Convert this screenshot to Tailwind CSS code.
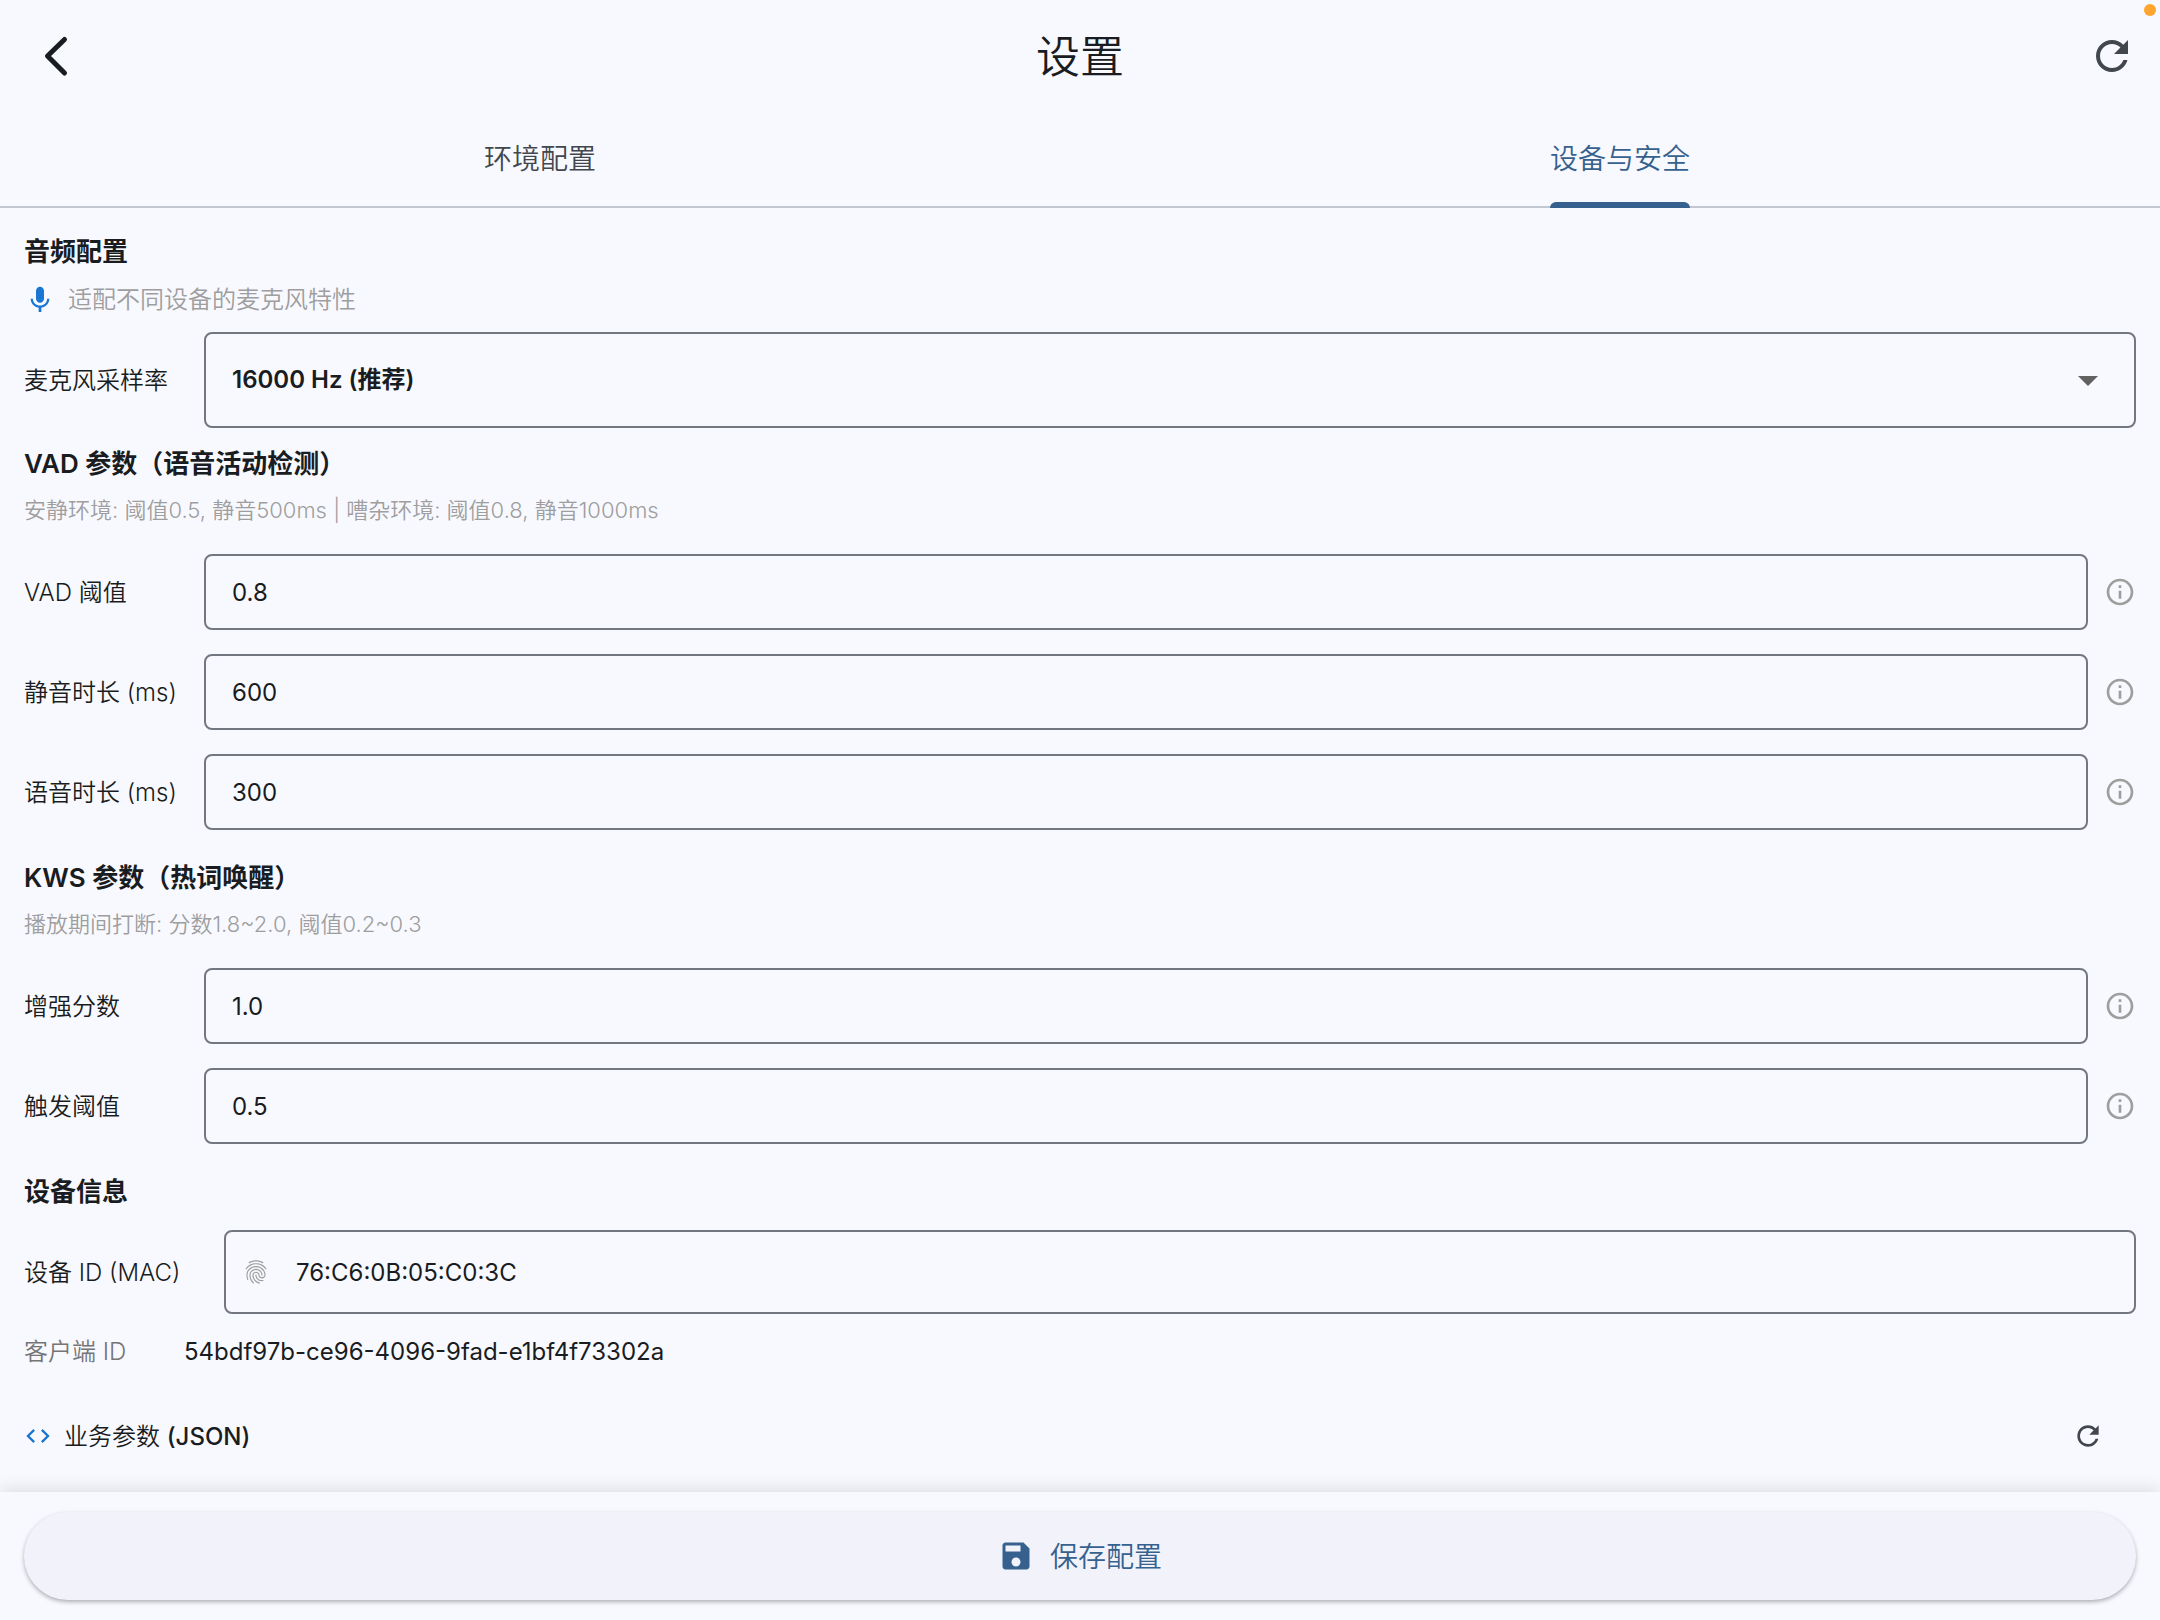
<!DOCTYPE html>
<html lang="zh-CN">
<head>
<meta charset="utf-8">
<meta name="viewport" content="width=device-width, initial-scale=1">
<title>设置</title>
<script src="https://cdn.jsdelivr.net/npm/@tailwindcss/browser@4"></script>
</head>
<body class="flex h-screen flex-col bg-[#f8f9ff] font-['Inter','Noto_Sans_CJK_SC',sans-serif] text-2xl text-[#191c20]">
  <span class="absolute top-1 right-1 size-3 rounded-full bg-[#ffa52e]"></span>

  <header class="flex h-28 shrink-0 items-center justify-between px-6">
    <button type="button" aria-label="返回" class="flex size-16 items-center justify-center">
      <svg class="size-12" viewBox="0 0 48 48" fill="none" stroke="currentColor" stroke-width="5" stroke-linecap="round" stroke-linejoin="round"><path d="M32.500 7.500 15.500 24 32.500 41"/></svg>
    </button>
    <h1 class="pt-0.5 text-[44px] leading-14 font-[350]">设置</h1>
    <button type="button" aria-label="刷新" class="flex w-16 items-center justify-end text-[#42474e]">
      <svg class="size-12" viewBox="0 0 24 24" fill="currentColor"><path d="M17.650 6.350C16.200 4.900 14.210 4 12 4c-4.420 0-7.990 3.580-7.990 8s3.570 8 7.990 8c3.730 0 6.840-2.550 7.730-6h-2.080c-.82 2.330-3.040 4-5.650 4-3.310 0-6-2.690-6-6s2.690-6 6-6c1.660 0 3.140.69 4.220 1.780L13 11h7V4l-2.350 2.350z"/></svg>
    </button>
  </header>

  <nav role="tablist" class="grid h-24 shrink-0 grid-cols-2 border-b-2 border-[#c3c7cf] text-[28px] leading-10 font-[350]">
    <button type="button" role="tab" aria-selected="false" class="flex justify-center pt-[27px] text-[#42474e]">环境配置</button>
    <button type="button" role="tab" aria-selected="true" class="flex justify-center text-[#36618e]">
      <span class="relative h-24 pt-[27px]">设备与安全<span class="absolute inset-x-0 bottom-0 h-1.5 rounded-t-md bg-[#36618e]"></span></span>
    </button>
  </nav>

  <main class="min-h-0 flex-1 overflow-hidden px-6 pt-6">
    <section>
      <h2 class="pt-0.5 text-[26px] leading-9 font-semibold">音频配置</h2>
      <p class="mt-3.5 flex items-center gap-3 leading-8 font-[350] text-[#9e9e9e]">
        <svg class="size-8 text-[#1976d2]" viewBox="0 0 24 24" fill="currentColor"><path d="M12 14c1.660 0 2.990-1.340 2.990-3L15 5c0-1.660-1.340-3-3-3S9 3.340 9 5v6c0 1.660 1.340 3 3 3zm5.300-3c0 3-2.540 5.100-5.300 5.100S6.700 14 6.700 11H5c0 3.410 2.720 6.230 6 6.720V21h2v-3.280c3.280-.48 6-3.300 6-6.720h-1.700z"/></svg>
        适配不同设备的麦克风特性
      </p>
      <div class="mt-4 flex items-center">
        <label for="rate" class="w-45 pt-0.5 font-[350]">麦克风采样率</label>
        <div class="relative flex-1">
          <select id="rate" class="h-24 w-full appearance-none rounded-lg border-2 border-[#73777f] px-[26px] font-semibold">
            <option>16000 Hz (推荐)</option>
            <option>48000 Hz</option>
          </select>
          <svg class="pointer-events-none absolute top-6 right-6 size-12 text-[#616161]" viewBox="0 0 24 24" fill="currentColor"><path d="M7 10l5 5 5-5z"/></svg>
        </div>
      </div>
    </section>

    <section class="mt-4">
      <h2 class="pt-0.5 text-[26px] leading-9 font-semibold">VAD 参数（语音活动检测）</h2>
      <p class="mt-3.5 text-[22px] leading-7 font-[350] text-[#9e9e9e]">安静环境: 阈值0.5, 静音500ms | 嘈杂环境: 阈值0.8, 静音1000ms</p>
      <div class="mt-[30px] flex flex-col gap-6">
        <div class="flex items-center">
          <label for="vad" class="w-45 pt-0.5 font-[350]">VAD 阈值</label>
          <input id="vad" value="0.8" class="h-19 min-w-0 flex-1 rounded-lg border-2 border-[#73777f] px-[26px]">
          <button type="button" aria-label="说明" class="ml-4 text-[#9e9e9e]"><svg class="size-8" viewBox="0 0 24 24" fill="currentColor"><path d="M11 7h2v2h-2zm0 4h2v6h-2zm1-9C6.480 2 2 6.480 2 12s4.480 10 10 10 10-4.480 10-10S17.520 2 12 2zm0 18c-4.410 0-8-3.590-8-8s3.590-8 8-8 8 3.590 8 8-3.590 8-8 8z"/></svg></button>
        </div>
        <div class="flex items-center">
          <label for="silence" class="w-45 pt-0.5 font-[350]">静音时长 (ms)</label>
          <input id="silence" value="600" class="h-19 min-w-0 flex-1 rounded-lg border-2 border-[#73777f] px-[26px]">
          <button type="button" aria-label="说明" class="ml-4 text-[#9e9e9e]"><svg class="size-8" viewBox="0 0 24 24" fill="currentColor"><path d="M11 7h2v2h-2zm0 4h2v6h-2zm1-9C6.480 2 2 6.480 2 12s4.480 10 10 10 10-4.480 10-10S17.520 2 12 2zm0 18c-4.410 0-8-3.590-8-8s3.590-8 8-8 8 3.590 8 8-3.590 8-8 8z"/></svg></button>
        </div>
        <div class="flex items-center">
          <label for="speech" class="w-45 pt-0.5 font-[350]">语音时长 (ms)</label>
          <input id="speech" value="300" class="h-19 min-w-0 flex-1 rounded-lg border-2 border-[#73777f] px-[26px]">
          <button type="button" aria-label="说明" class="ml-4 text-[#9e9e9e]"><svg class="size-8" viewBox="0 0 24 24" fill="currentColor"><path d="M11 7h2v2h-2zm0 4h2v6h-2zm1-9C6.480 2 2 6.480 2 12s4.480 10 10 10 10-4.480 10-10S17.520 2 12 2zm0 18c-4.410 0-8-3.590-8-8s3.590-8 8-8 8 3.590 8 8-3.590 8-8 8z"/></svg></button>
        </div>
      </div>
    </section>

    <section class="mt-7">
      <h2 class="pt-0.5 text-[26px] leading-9 font-semibold">KWS 参数（热词唤醒）</h2>
      <p class="mt-3.5 text-[22px] leading-7 font-[350] text-[#9e9e9e]">播放期间打断: 分数1.8~2.0, 阈值0.2~0.3</p>
      <div class="mt-[30px] flex flex-col gap-6">
        <div class="flex items-center">
          <label for="boost" class="w-45 pt-0.5 font-[350]">增强分数</label>
          <input id="boost" value="1.0" class="h-19 min-w-0 flex-1 rounded-lg border-2 border-[#73777f] px-[26px]">
          <button type="button" aria-label="说明" class="ml-4 text-[#9e9e9e]"><svg class="size-8" viewBox="0 0 24 24" fill="currentColor"><path d="M11 7h2v2h-2zm0 4h2v6h-2zm1-9C6.480 2 2 6.480 2 12s4.480 10 10 10 10-4.480 10-10S17.520 2 12 2zm0 18c-4.410 0-8-3.590-8-8s3.590-8 8-8 8 3.590 8 8-3.590 8-8 8z"/></svg></button>
        </div>
        <div class="flex items-center">
          <label for="trigger" class="w-45 pt-0.5 font-[350]">触发阈值</label>
          <input id="trigger" value="0.5" class="h-19 min-w-0 flex-1 rounded-lg border-2 border-[#73777f] px-[26px]">
          <button type="button" aria-label="说明" class="ml-4 text-[#9e9e9e]"><svg class="size-8" viewBox="0 0 24 24" fill="currentColor"><path d="M11 7h2v2h-2zm0 4h2v6h-2zm1-9C6.480 2 2 6.480 2 12s4.480 10 10 10 10-4.480 10-10S17.520 2 12 2zm0 18c-4.410 0-8-3.590-8-8s3.590-8 8-8 8 3.590 8 8-3.590 8-8 8z"/></svg></button>
        </div>
      </div>
    </section>

    <section class="mt-7">
      <h2 class="pt-0.5 text-[26px] leading-9 font-semibold">设备信息</h2>
      <div class="mt-5 flex items-center">
        <label for="mac" class="w-50 pt-0.5 font-[350]">设备 ID (MAC)</label>
        <div class="relative flex-1">
          <svg class="pointer-events-none absolute top-7 left-[18px] size-7 text-[#9e9e9e]" viewBox="0 0 24 24" fill="currentColor"><path d="M17.810 4.470c-.08 0-.16-.02-.23-.06C15.660 3.420 14 3 12.010 3c-1.980 0-3.860.47-5.570 1.410-.24.13-.54.04-.68-.2-.13-.24-.04-.55.2-.68C7.820 2.520 9.860 2 12.010 2c2.130 0 3.990.47 6.030 1.520.25.13.34.43.21.67-.09.18-.26.28-.44.28zM3.500 9.720c-.1 0-.2-.03-.29-.09-.23-.16-.28-.47-.12-.7.99-1.400 2.250-2.500 3.750-3.270C9.980 4.040 14 4.030 17.150 5.650c1.500.77 2.760 1.860 3.750 3.250.16.22.11.54-.12.7-.23.16-.54.11-.7-.12-.9-1.260-2.040-2.250-3.390-2.940-2.870-1.470-6.540-1.470-9.400.01-1.360.7-2.500 1.700-3.400 2.960-.08.14-.23.21-.39.21zm6.250 12.070c-.13 0-.26-.05-.35-.15-.87-.87-1.340-1.430-2.010-2.640-.69-1.230-1.050-2.730-1.050-4.340 0-2.970 2.540-5.390 5.660-5.390s5.660 2.420 5.660 5.390c0 .28-.22.5-.5.5s-.5-.22-.5-.5c0-2.420-2.090-4.390-4.660-4.390-2.570 0-4.660 1.970-4.660 4.390 0 1.440.32 2.770.93 3.850.64 1.150 1.080 1.640 1.850 2.420.19.2.19.51 0 .71-.11.1-.24.15-.37.15zm7.170-1.850c-1.190 0-2.240-.3-3.100-.89-1.490-1.010-2.380-2.650-2.380-4.390 0-.28.22-.5.5-.5s.5.22.5.5c0 1.410.72 2.740 1.940 3.560.71.48 1.540.71 2.540.71.24 0 .64-.03 1.040-.1.27-.05.53.13.58.41.05.27-.13.53-.41.58-.57.11-1.070.12-1.210.12zM14.910 22c-.04 0-.09-.01-.13-.02-1.590-.44-2.630-1.030-3.720-2.100-1.400-1.390-2.170-3.240-2.170-5.220 0-1.620 1.380-2.940 3.080-2.940 1.700 0 3.080 1.320 3.080 2.940 0 1.070.93 1.940 2.080 1.940s2.080-.87 2.080-1.940c0-3.770-3.250-6.830-7.250-6.830-2.840 0-5.440 1.580-6.610 4.030-.39.81-.59 1.760-.59 2.800 0 .78.07 2.010.67 3.610.1.26-.03.55-.29.64-.26.1-.55-.04-.64-.29-.49-1.310-.73-2.610-.73-3.960 0-1.200.23-2.290.68-3.240 1.330-2.790 4.280-4.600 7.510-4.600 4.550 0 8.250 3.510 8.250 7.830 0 1.620-1.380 2.940-3.080 2.940s-3.080-1.320-3.080-2.940c0-1.070-.93-1.940-2.080-1.940s-2.080.87-2.080 1.940c0 1.710.66 3.310 1.870 4.510.95.94 1.860 1.460 3.270 1.850.27.07.42.35.35.61-.05.23-.26.38-.47.38z"/></svg>
          <input id="mac" value="76:C6:0B:05:C0:3C" class="block h-21 w-full rounded-lg border-2 border-[#73777f] pr-6 pl-[70px]">
        </div>
      </div>
      <dl class="mt-[22px] flex items-center leading-8">
        <dt class="w-40 font-[350] text-[#757575]">客户端 ID</dt>
        <dd>54bdf97b-ce96-4096-9fad-e1bf4f73302a</dd>
      </dl>
    </section>

    <section class="mt-[51px] flex items-center gap-3 leading-8">
      <svg class="size-7 text-[#1976d2]" viewBox="0 0 24 24" fill="currentColor"><path d="M9.400 16.600L4.800 12l4.600-4.600L8 6l-6 6 6 6 1.400-1.400zm5.200 0l4.600-4.600-4.600-4.600L16 6l6 6-6 6-1.400-1.400z"/></svg>
      <h3 class="flex-1 pt-0.5 font-[350]">业务参数 <span class="font-medium">(JSON)</span></h3>
      <button type="button" aria-label="重置参数" class="mr-8 text-[#42474e]">
        <svg class="size-8" viewBox="0 0 24 24" fill="currentColor"><path d="M17.650 6.350C16.200 4.900 14.210 4 12 4c-4.420 0-7.990 3.580-7.990 8s3.570 8 7.990 8c3.730 0 6.840-2.550 7.730-6h-2.080c-.82 2.330-3.040 4-5.650 4-3.310 0-6-2.690-6-6s2.690-6 6-6c1.660 0 3.140.69 4.220 1.780L13 11h7V4l-2.350 2.350z"/></svg>
      </button>
    </section>
  </main>

  <footer class="relative shrink-0 bg-[#f8f9ff] px-6 py-5 shadow-[0_-4px_16px_rgba(0,0,0,0.1)]">
    <button type="button" class="flex h-22 w-full items-center justify-center gap-4 rounded-full bg-[#f1f2fa] text-[28px] leading-10 font-[350] text-[#36618e] shadow-[0_2px_4px_rgba(0,0,0,0.3)]">
      <svg class="size-9" viewBox="0 0 24 24" fill="currentColor"><path d="M17 3H5c-1.110 0-2 .9-2 2v14c0 1.100.89 2 2 2h14c1.100 0 2-.9 2-2V7l-4-4zm-5 16c-1.660 0-3-1.340-3-3s1.340-3 3-3 3 1.340 3 3-1.340 3-3 3zm3-10H5V5h10v4z"/></svg>
      <span class="pt-0.5">保存配置</span>
    </button>
  </footer>
</body>
</html>
